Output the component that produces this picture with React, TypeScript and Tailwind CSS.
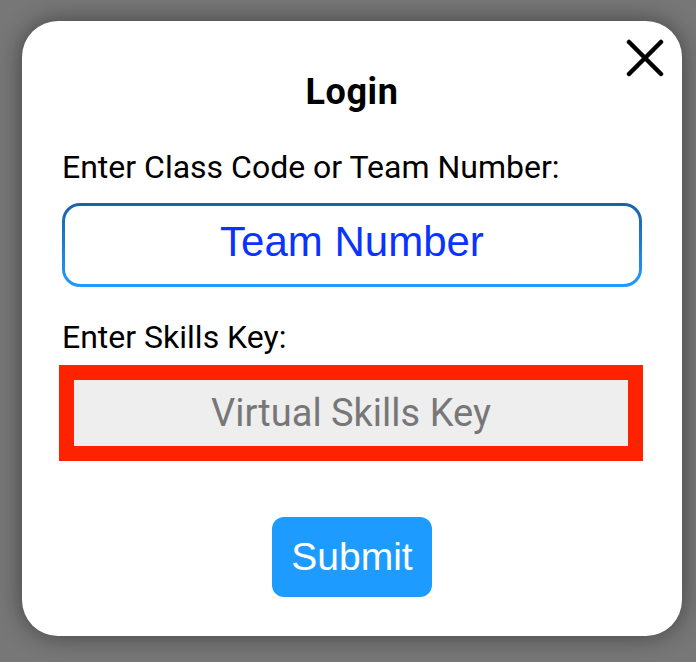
import React from "react";

export default function App() {
  return (
    <div className="w-[696px] h-[662px] bg-[#777777] pt-[21px] pl-[22px] overflow-hidden">
      <div className="relative w-[660px] h-[615px] rounded-[36px] bg-white shadow-[0_0_24px_rgba(0,0,0,0.45)] flex flex-col" style={{ fontFamily: "Roboto, 'Liberation Sans', sans-serif" }}>
        <button className="absolute right-[18px] top-[18px] w-[38px] h-[38px] flex items-center justify-center">
          <svg width="38" height="38" viewBox="0 0 38 38">
            <path d="M3 3 L35 35 M35 3 L3 35" stroke="#000" strokeWidth="4.5" strokeLinecap="round" />
          </svg>
        </button>
        <h1 className="mt-[49px] text-center text-[36px] leading-[44px] font-bold text-black tracking-[0.6px]">Login</h1>
        <div className="px-[40px] mt-[34px]">
          <p className="text-[32px] leading-[38px] text-black">Enter Class Code or Team Number:</p>
          <div className="mt-[17px] h-[84px] rounded-[18px] p-[3px] bg-gradient-to-b from-[#1a62a8] to-[#219bff]">
            <div className="w-full h-full rounded-[15px] bg-white flex items-center justify-center pb-[6px]">
              <span className="text-[42px] leading-[48px] text-[#0a33ff]" style={{ fontFamily: "'Liberation Sans', Arial, sans-serif" }}>Team Number</span>
            </div>
          </div>
          <p className="mt-[31px] text-[32px] leading-[38px] text-black">Enter Skills Key:</p>
        </div>
        <div className="pl-[37px] mt-[9px]">
          <div className="w-[584px] h-[96px] border-[15px] border-[#ff2200] bg-[#eeeeee] flex items-center justify-center">
            <span className="text-[38px] leading-[44px] text-[#777777]">Virtual Skills Key</span>
          </div>
        </div>
        <div className="flex justify-center mt-[56px]">
          <button className="w-[160px] h-[80px] rounded-[12px] bg-[#1e9bff] text-white text-[39px] leading-[44px]" style={{ fontFamily: "'Liberation Sans', Arial, sans-serif" }}>Submit</button>
        </div>
      </div>
    </div>
  );
}
